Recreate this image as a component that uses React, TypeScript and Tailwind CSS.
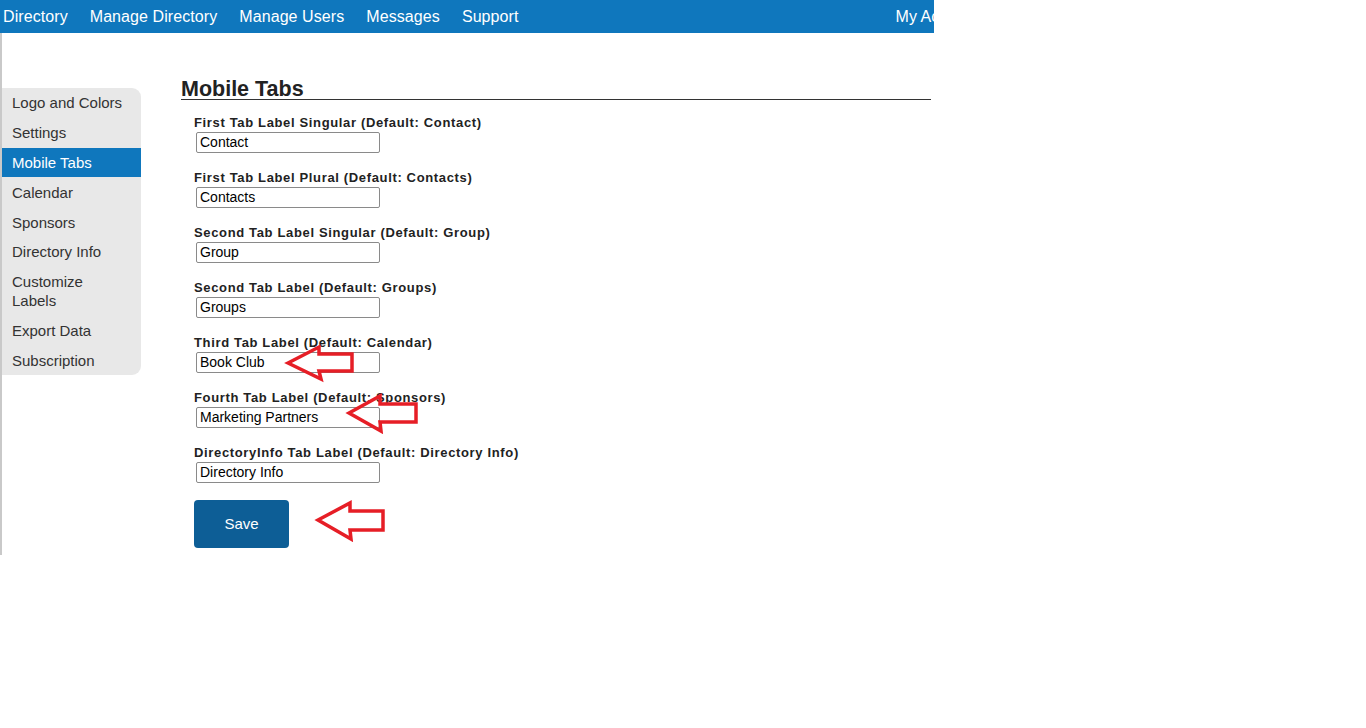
import React from 'react';

const navItems = ['Directory', 'Manage Directory', 'Manage Users', 'Messages', 'Support'];

const sideItems: { label: React.ReactNode; active?: boolean }[] = [
  { label: 'Logo and Colors' },
  { label: 'Settings' },
  { label: 'Mobile Tabs', active: true },
  { label: 'Calendar' },
  { label: 'Sponsors' },
  { label: 'Directory Info' },
  {
    label: (
      <>
        Customize
        <br />
        Labels
      </>
    ),
  },
  { label: 'Export Data' },
  { label: 'Subscription' },
];

const fields = [
  { label: 'First Tab Label Singular (Default: Contact)', value: 'Contact' },
  { label: 'First Tab Label Plural (Default: Contacts)', value: 'Contacts' },
  { label: 'Second Tab Label Singular (Default: Group)', value: 'Group' },
  { label: 'Second Tab Label (Default: Groups)', value: 'Groups' },
  { label: 'Third Tab Label (Default: Calendar)', value: 'Book Club' },
  { label: 'Fourth Tab Label (Default: Sponsors)', value: 'Marketing Partners' },
  { label: 'DirectoryInfo Tab Label (Default: Directory Info)', value: 'Directory Info' },
];

// hollow red arrows drawn over the screenshot
const arrows = [
  '288,363 319,347 319,354 352,354 352,371 319,371 321,379',
  '349,413 380,396 380,404 416,404 416,422 380,422 381,431',
  '318,520 350,503 350,511 383,511 383,530 350,530 351,539',
];

export default function App() {
  return (
    <div className="relative w-[934px] h-[555px] overflow-hidden bg-white font-['Liberation_Sans',Arial,sans-serif]">
      <nav className="h-[33px] w-[1000px] bg-[#0f77bd] flex items-center pl-[3px] pr-[21px] text-white text-[16px] tracking-[0.08px] gap-[22px]">
        {navItems.map((item) => (
          <span key={item}>{item}</span>
        ))}
        <span className="ml-auto">My Account</span>
      </nav>

      <div className="h-[522px] border-l-2 border-[#c9c9c9] flex">
        <aside className="mt-[55px] w-[139px] self-start bg-[#e8e8e8] rounded-r-[9px]">
          {sideItems.map((item, i) => (
            <div
              key={i}
              className={
                item.active
                  ? 'pl-[10px] py-[5.4px] text-[15px] leading-[19px] bg-[#0f77bd] text-white'
                  : 'pl-[10px] py-[5.4px] text-[15px] leading-[19px] text-[#333]'
              }
            >
              {item.label}
            </div>
          ))}
        </aside>

        <main className="ml-[40px] mt-[43px] w-[750px]">
          <h2 className="pt-[4px] text-[21.5px] font-bold leading-[19px] text-[#222] border-b border-[#333]">
            Mobile Tabs
          </h2>
          <form className="pl-[13px] pt-[15px] flex flex-col gap-[17px]">
            {fields.map((f) => (
              <div key={f.label} className="flex flex-col gap-[2px]">
                <label className="text-[13px] leading-[15px] font-bold text-[#222] tracking-[0.65px]">
                  {f.label}
                </label>
                <input
                  defaultValue={f.value}
                  className="ml-[2px] w-[184px] h-[21px] border border-[#8a8a8a] rounded-[2px] px-[3px] text-[14px] text-black outline-none"
                />
              </div>
            ))}
            <button
              type="button"
              className="w-[95px] h-[48px] rounded-[4px] bg-[#0d5e96] text-white text-[15px]"
            >
              Save
            </button>
          </form>
        </main>
      </div>

      <svg className="absolute inset-0 pointer-events-none" width="934" height="555">
        {arrows.map((pts) => (
          <polygon
            key={pts}
            points={pts}
            fill="none"
            stroke="#e61e26"
            strokeWidth="3.5"
            strokeLinejoin="miter"
          />
        ))}
      </svg>
    </div>
  );
}
